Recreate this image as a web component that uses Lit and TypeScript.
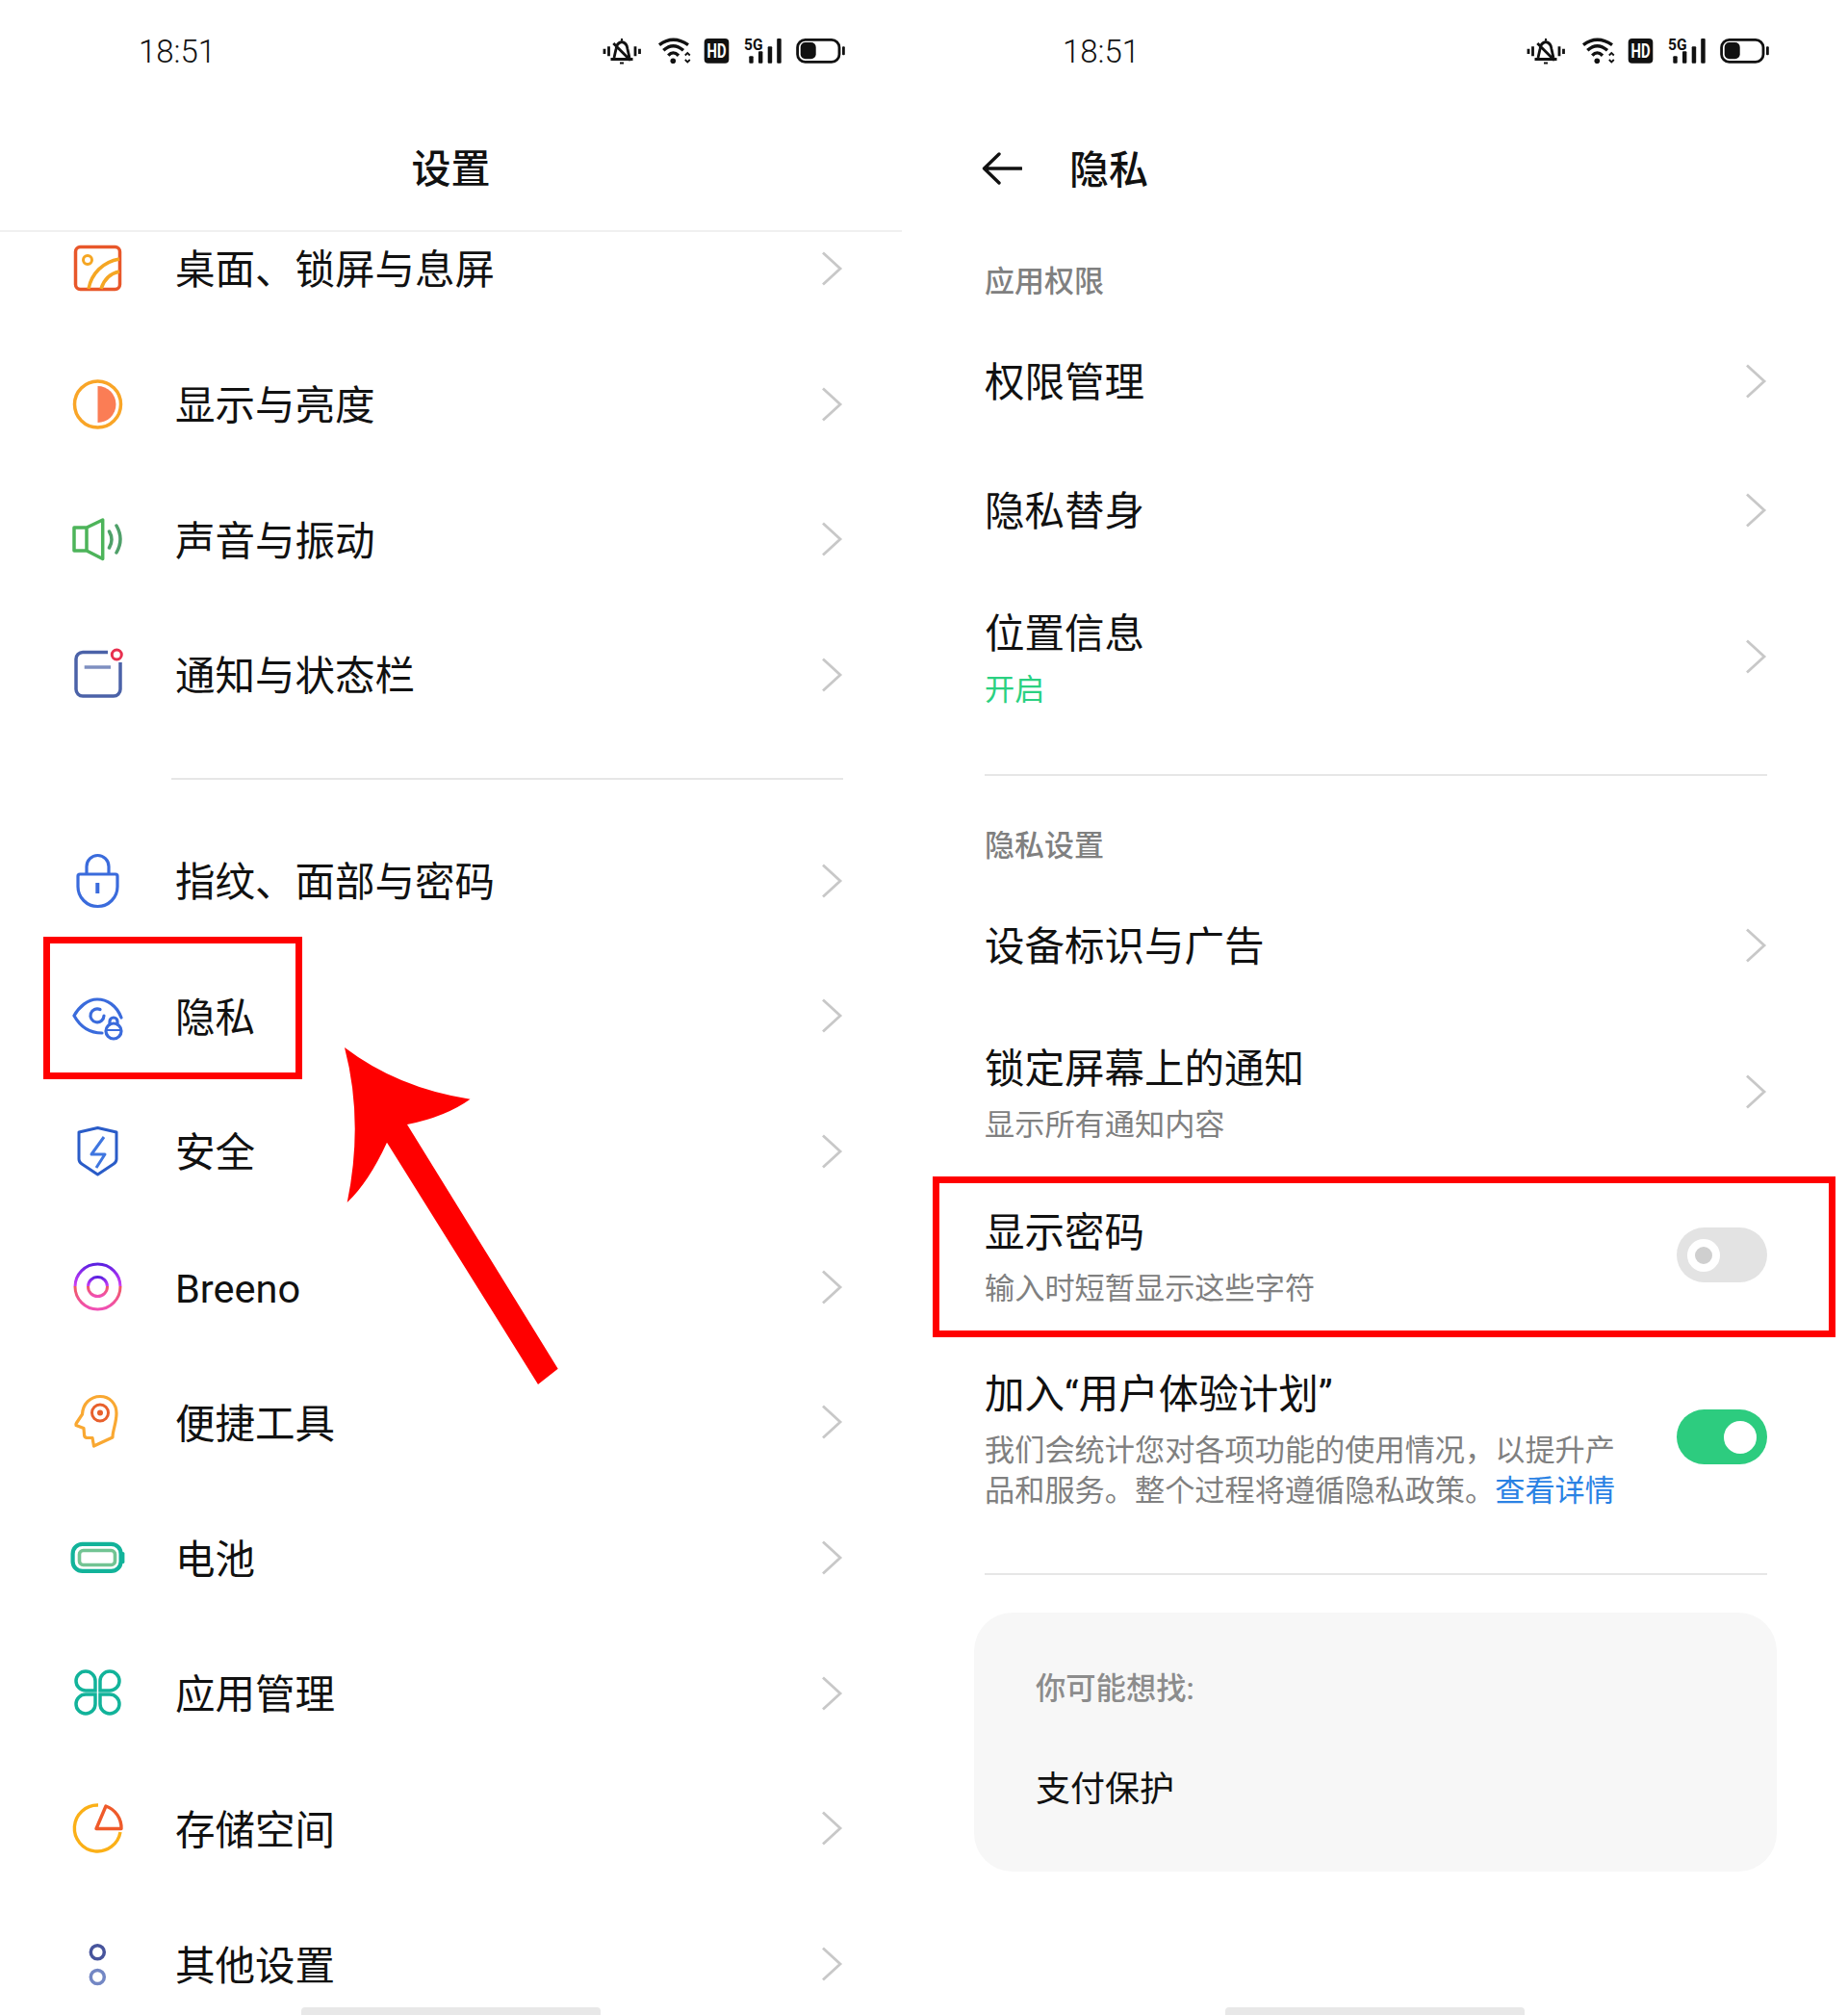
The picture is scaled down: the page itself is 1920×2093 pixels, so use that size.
import { LitElement, css, html } from "lit";
import { customElement, property } from "lit/decorators.js";

const settingsIcons = {
  desktop: html`<svg viewBox="0 0 60 60" fill="none" stroke-width="3.5">
    <rect x="7.5" y="7.5" width="46" height="44" rx="5" stroke="#e8572a" />
    <circle cx="20" cy="21" r="4.5" stroke="#f5a623" stroke-width="3" />
    <path d="M21 51C24 35 36 23 53 20M34 51C37 41 44 35 53 33" stroke="#f5a623" />
  </svg>`,
  display: html`<svg viewBox="0 0 60 60" fill="none">
    <circle cx="30.5" cy="30" r="24" stroke="#f9a527" stroke-width="3.5" />
    <path d="M30.5 11A19 19 0 0 1 30.5 49Z" fill="#fb7d55" />
  </svg>`,
  sound: html`<svg viewBox="0 0 60 60" fill="none" stroke-width="3.5" stroke-linejoin="round" stroke-linecap="round">
    <path d="M19 17H6V41H19M19 17L35.7 9V49.5L19 41Z" stroke="#4db45a" />
    <path d="M42.5 21Q47.5 29.5 42.5 38M50 15Q58 29 50 43" stroke="#4fa069" />
  </svg>`,
  notify: html`<svg viewBox="0 0 60 60" fill="none" stroke-width="3.5">
    <path d="M41 6.5H15A7 7 0 0 0 8 13.5V45A7 7 0 0 0 15 52H47A7 7 0 0 0 54 45V17" stroke="#4b62a8" />
    <path d="M16.7 22H44" stroke="#7e8fc0" />
    <circle cx="50.3" cy="9" r="5" stroke="#e8304f" stroke-width="3" />
  </svg>`,
  lock: html`<svg viewBox="0 0 60 60" fill="none" stroke="#3a6bdc" stroke-width="3.2">
    <path d="M19 23V15A11.5 11.5 0 0 1 42 15V23" />
    <path d="M12 23H49A2 2 0 0 1 51 25V36A20.5 20.5 0 0 1 10 36V25A2 2 0 0 1 12 23Z" />
    <path d="M30.3 32V43" stroke-width="4" />
  </svg>`,
  eye: html`<svg viewBox="0 0 60 60" fill="none" stroke="#3a6bdc" stroke-width="3.2" stroke-linecap="round">
    <path d="M55 31C50 18 40 12 30 12C20 12 11 20 6 29C11 38 20 47 35 47" />
    <path d="M33 22.5A7 7 0 1 0 37 29" />
    <circle cx="47" cy="45" r="8" />
    <path d="M43 38V35A4 4 0 0 1 51 35V38" />
    <path d="M39 44H55" stroke-width="2" />
  </svg>`,
  shield: html`<svg viewBox="0 0 60 60" fill="none" stroke-width="3" stroke-linejoin="round">
    <path d="M30.5 5.5L50 10V38Q50 41 47 43L30.5 54L14 43Q11 41 11 38V10Z" stroke="#2a5cc8" />
    <path d="M37 15L24 33H38L29 47" stroke="#3f76e0" />
  </svg>`,
  breeno: html`<svg viewBox="0 0 60 60" fill="none" stroke-width="3">
    <defs>
      <linearGradient id="breeno" x1="0" y1="0" x2="0" y2="1">
        <stop offset="0" stop-color="#5a20e0" />
        <stop offset="0.25" stop-color="#a030f0" />
        <stop offset="0.5" stop-color="#d040f0" />
        <stop offset="0.5" stop-color="#f05a60" />
        <stop offset="1" stop-color="#f04fb5" />
      </linearGradient>
    </defs>
    <circle cx="30.5" cy="29.5" r="23.5" stroke="url(#breeno)" />
    <circle cx="30.5" cy="29.5" r="10" stroke="url(#breeno)" />
  </svg>`,
  tools: html`<svg viewBox="0 0 60 60" fill="none" stroke-linejoin="round">
    <path
      d="M26.5 54L25 45.5H19Q16.5 45 16.5 42L16 35.5L8 32.5Q7.5 31.5 8.5 30L14.5 21C15 10 23 2.5 33 2.5C43 2.5 50 10 50 20C50 30 46 38 46 45Z"
      stroke="#f9a832"
      stroke-width="3.2"
    />
    <circle cx="33" cy="19.5" r="8.5" stroke="#e8602c" stroke-width="3" />
    <circle cx="33" cy="19.5" r="3" fill="#e8602c" />
  </svg>`,
  battery: html`<svg viewBox="0 0 60 60" fill="none">
    <rect x="4.6" y="14.9" width="50" height="28" rx="10" stroke="#12b39a" stroke-width="4.2" />
    <rect x="11.5" y="21.5" width="37" height="15" rx="4" stroke="#72c493" stroke-width="3.6" />
    <rect x="55" y="23" width="3.4" height="12" rx="1.5" fill="#12b39a" />
  </svg>`,
  apps: html`<svg viewBox="0 0 60 60" fill="none" stroke="#12b39a" stroke-width="3.5">
    <path d="M28 27H18A10 10 0 1 1 28 17Z" />
    <path d="M33 27V17A10 10 0 1 1 43 27Z" />
    <path d="M28 31V41A10 10 0 1 1 18 31Z" />
    <path d="M33 31H43A10 10 0 1 1 33 41Z" />
  </svg>`,
  storage: html`<svg viewBox="0 0 60 60" fill="none" stroke-width="3.4">
    <path d="M31 5A24 24 0 1 0 54 33" stroke="#fbb017" />
    <path d="M29 29.5L39 6A24 24 0 0 1 55 29.5Z" stroke="#ef5a2a" stroke-linejoin="round" />
  </svg>`,
  other: html`<svg viewBox="0 0 60 60" fill="none" stroke-width="3.5">
    <circle cx="30.3" cy="16.7" r="7" stroke="#47549c" />
    <circle cx="30.3" cy="42.5" r="7" stroke="#7387c4" />
  </svg>`,
};

type IconName = keyof typeof settingsIcons;

const firstGroup: [IconName, string][] = [
  ["desktop", "桌面、锁屏与息屏"],
  ["display", "显示与亮度"],
  ["sound", "声音与振动"],
  ["notify", "通知与状态栏"],
];

const secondGroup: [IconName, string][] = [
  ["lock", "指纹、面部与密码"],
  ["eye", "隐私"],
  ["shield", "安全"],
  ["breeno", "Breeno"],
  ["tools", "便捷工具"],
  ["battery", "电池"],
  ["apps", "应用管理"],
  ["storage", "存储空间"],
  ["other", "其他设置"],
];

const chevron = html`<svg class="chevron" viewBox="0 0 24 38" fill="none">
  <path d="M3 2.5L21 19L3 35.5" stroke="#c8c8c8" stroke-width="2.8" />
</svg>`;

const statusIcons = html`<svg class="status-icons" viewBox="0 0 260 36" fill="none">
  <g stroke="#111" stroke-width="2.8">
    <path d="M8 15.7V21M12.5 13.3V23.3M40 13.3V23.3M44.5 15.7V21" />
    <path d="M18 25L20 16C20.5 11 23 9 26 8.5C29 9 31.5 11 32 16L34 25M14.5 26.5H37.5M17.3 10L35 27.7" />
    <path d="M26 5V7M24 30.5H28" stroke-width="2" />
    <path d="M65 11.7Q79.3 1 95 11.7M69.3 17.3Q79.3 8 90 17.3M74.3 22.7Q79.3 17 85 22.7" stroke-width="3.4" />
    <path d="M91.8 22.5L94.3 20L96.8 22.5M91.8 27L94.3 29.5L96.8 27" stroke-width="1.8" />
    <rect x="208.6" y="6.3" width="43.4" height="23.1" rx="8" />
  </g>
  <circle cx="79.3" cy="28.3" r="2.8" fill="#111" />
  <rect x="111.7" y="5" width="25.6" height="25.7" rx="4" fill="#111" />
  <text x="114.5" y="25" textLength="20" lengthAdjust="spacingAndGlyphs" font-size="20" font-weight="700" fill="#fff">HD</text>
  <text x="153" y="16.7" textLength="19.5" lengthAdjust="spacingAndGlyphs" font-size="16" font-weight="700" fill="#111">5G</text>
  <g fill="#111">
    <rect x="158.3" y="23.3" width="4.4" height="7.4" rx="1" />
    <rect x="168" y="18.3" width="4.4" height="12.4" rx="1" />
    <rect x="177.7" y="13.3" width="4.5" height="17.4" rx="1" />
    <rect x="187.2" y="5" width="4.5" height="25.7" rx="1" />
    <rect x="211.7" y="9" width="16" height="17.3" rx="5" />
    <rect x="255" y="13.3" width="2.8" height="9" rx="1" />
  </g>
</svg>`;

@customElement("status-bar")
export class StatusBar extends LitElement {
  render() {
    return html`<span class="time">18:51</span>${statusIcons}`;
  }

  static styles = css`
    :host {
      display: flex;
      align-items: center;
      justify-content: space-between;
      block-size: 106px;
      padding-inline: 144px 57px;
    }

    .time {
      font-family: Roboto, sans-serif;
      font-size: 33px;
      font-weight: 300;
      color: #111;
    }

    .status-icons {
      inline-size: 260px;
      block-size: 36px;
      font-family: Roboto, sans-serif;
    }
  `;
}

@customElement("settings-panel")
export class SettingsPanel extends LitElement {
  row([icon, label]: [IconName, string]) {
    return html`
      <div class="row">
        <span class="icon">${settingsIcons[icon]}</span>
        <span class="label">${label}</span>
        ${chevron}
      </div>
    `;
  }

  render() {
    return html`
      <status-bar></status-bar>
      <header>设置</header>
      <div class="list">
        <div class="scroll">
          ${firstGroup.map((r) => this.row(r))}
          <div class="divider"></div>
          ${secondGroup.map((r) => this.row(r))}
        </div>
      </div>
    `;
  }

  static styles = css`
    :host {
      display: flex;
      flex-direction: column;
      inline-size: 937px;
      block-size: 2093px;
      overflow: hidden;
      background: #fff;
    }

    header {
      box-sizing: border-box;
      block-size: 135px;
      padding-block-start: 41px;
      line-height: 58px;
      text-align: center;
      font-size: 41px;
      font-weight: 500;
      color: #111;
      border-block-end: 2px solid #f0f0f0;
    }

    .list {
      flex: 1;
      overflow: hidden;
    }

    .scroll {
      margin-block-start: -31px;
    }

    .row {
      display: flex;
      align-items: center;
      block-size: 140.7px;
      padding-inline: 71px 61px;
    }

    .icon,
    .icon svg {
      display: block;
      inline-size: 60px;
      block-size: 60px;
    }

    .icon {
      margin-block-end: 2px;
    }

    .label {
      flex: 1;
      margin-inline-start: 51px;
      padding-block-start: 2px;
      font-size: 41.5px;
      line-height: 58px;
      color: #111;
    }

    .chevron {
      inline-size: 24px;
      block-size: 38px;
      margin-block-end: 3px;
    }

    .divider {
      block-size: 2px;
      margin: 35px 61px 36px 178px;
      background: #e6e6e6;
    }
  `;
}

@customElement("setting-row")
export class SettingRow extends LitElement {
  @property() titulo = "";
  @property() sub = "";
  @property({ type: Boolean }) green = false;

  render() {
    return html`
      <div class="text">
        <div class="title">${this.titulo}</div>
        ${this.sub ? html`<div class="sub ${this.green ? "green" : ""}">${this.sub}</div>` : ""}
        <slot name="desc"></slot>
      </div>
      <slot>${chevron}</slot>
    `;
  }

  static styles = css`
    :host {
      display: flex;
      align-items: center;
      justify-content: space-between;
      min-block-size: 134px;
    }

    :host([two]) {
      block-size: 170px;
    }

    .title {
      font-size: 41.5px;
      line-height: 58px;
      color: #111;
    }

    .sub,
    ::slotted([slot="desc"]) {
      margin-block-start: 8px;
      inline-size: 660px;
      font-size: 31.2px;
      line-height: 42px;
      color: #808080;
    }

    .green {
      color: #2ad181;
    }

    .chevron {
      inline-size: 24px;
      block-size: 38px;
      margin-block-end: 4px;
    }
  `;
}

@customElement("privacy-panel")
export class PrivacyPanel extends LitElement {
  render() {
    return html`
      <status-bar></status-bar>
      <header>
        <svg class="back" viewBox="0 0 42 34" fill="none">
          <path d="M41 17H3M18 2L2.5 17L18 32" stroke="#111" stroke-width="3.4" stroke-linecap="round" stroke-linejoin="round" />
        </svg>
        <span>隐私</span>
      </header>
      <div class="content">
        <div class="section first">应用权限</div>
        <setting-row titulo="权限管理"></setting-row>
        <setting-row titulo="隐私替身"></setting-row>
        <setting-row two titulo="位置信息" sub="开启" green></setting-row>
        <div class="divider"></div>
        <div class="section">隐私设置</div>
        <setting-row titulo="设备标识与广告"></setting-row>
        <setting-row two titulo="锁定屏幕上的通知" sub="显示所有通知内容"></setting-row>
        <setting-row two titulo="显示密码" sub="输入时短暂显示这些字符">
          <span class="toggle"><span class="knob"></span></span>
        </setting-row>
        <setting-row class="plan" titulo="加入“用户体验计划”">
          <div slot="desc">我们会统计您对各项功能的使用情况，以提升产品和服务。整个过程将遵循隐私政策。<a>查看详情</a></div>
          <span class="toggle on"><span class="knob"></span></span>
        </setting-row>
        <div class="divider end"></div>
        <div class="card">
          <div class="hint">你可能想找:</div>
          <div class="link">支付保护</div>
        </div>
      </div>
    `;
  }

  static styles = css`
    :host {
      display: flex;
      flex-direction: column;
      inline-size: 937px;
      block-size: 2093px;
      overflow: hidden;
      background: #fff;
    }

    header {
      display: flex;
      align-items: center;
      gap: 49px;
      box-sizing: border-box;
      block-size: 135px;
      padding-inline-start: 60px;
      padding-block-end: 1px;
      font-size: 41px;
      font-weight: 500;
      color: #111;
    }

    .back {
      inline-size: 42px;
      block-size: 34px;
      margin-block-start: 3px;
    }

    .content {
      padding-inline: 63px 61px;
    }

    .section {
      margin-block: 45px 10px;
      font-size: 31px;
      font-weight: 500;
      line-height: 56px;
      color: #808080;
    }

    .section.first {
      margin-block-start: 24px;
    }

    .divider {
      block-size: 2px;
      margin-block-start: 35px;
      background: #e6e6e6;
    }

    .divider.end {
      margin-block-start: 34px;
    }

    .plan {
      padding-block: 29px 30px;
    }

    a {
      color: #2a82e4;
    }

    .toggle {
      display: flex;
      align-items: center;
      box-sizing: border-box;
      inline-size: 94px;
      block-size: 57px;
      margin-block-end: 5px;
      padding-inline: 11px;
      border-radius: 29px;
      background: #e3e3e3;
    }

    .knob {
      box-sizing: border-box;
      inline-size: 34px;
      block-size: 34px;
      border-radius: 50%;
      border: 8px solid #fff;
      background: #cfcfcf;
    }

    .toggle.on {
      justify-content: flex-end;
      background: #2dcc7f;
    }

    .toggle.on .knob {
      background: #fff;
    }

    .card {
      box-sizing: border-box;
      block-size: 269px;
      margin: 39px -10px 0 -11px;
      padding: 59px 64px 0;
      border-radius: 40px;
      background: #f7f7f7;
    }

    .hint {
      font-size: 31.3px;
      font-weight: 500;
      line-height: 42px;
      color: #8c8c8c;
    }

    .link {
      margin-block-start: 58px;
      font-size: 36px;
      line-height: 50px;
      color: #111;
    }
  `;
}

@customElement("app-root")
export class AppRoot extends LitElement {
  render() {
    return html`
      <settings-panel></settings-panel>
      <privacy-panel></privacy-panel>
      <div class="home left"></div>
      <div class="home right"></div>
      <div class="mark mark-item"></div>
      <div class="mark mark-row"></div>
      <svg class="arrow" viewBox="0 0 240 365">
        <path
          d="M10 8Q65 50 140.5 61.7Q115 80 75 88L231.7 341.7L211 358L54 106.7Q35 148 12.7 169Q30 85 10 8Z"
          fill="#ff0000"
        />
      </svg>
    `;
  }

  static styles = css`
    :host {
      display: flex;
      gap: 23px;
      position: relative;
      inline-size: 1920px;
      block-size: 2093px;
      overflow: hidden;
      background: #fff;
      font-family: Roboto, "Noto Sans CJK SC", sans-serif;
    }

    .home {
      position: absolute;
      inset-block-end: 0;
      inline-size: 311px;
      block-size: 8px;
      border-radius: 4px 4px 0 0;
      background: #e8e8e8;
    }

    .home.left {
      inset-inline-start: 313px;
    }

    .home.right {
      inset-inline-start: 1273px;
    }

    .mark {
      position: absolute;
      box-sizing: border-box;
      border: 7px solid #ff0000;
    }

    .mark-item {
      inset-inline-start: 45px;
      inset-block-start: 973px;
      inline-size: 269px;
      block-size: 148px;
    }

    .mark-row {
      inset-inline-start: 969px;
      inset-block-start: 1222px;
      inline-size: 938px;
      block-size: 167px;
    }

    .arrow {
      position: absolute;
      inset-inline-start: 348px;
      inset-block-start: 1080px;
      inline-size: 240px;
      block-size: 365px;
    }
  `;
}
